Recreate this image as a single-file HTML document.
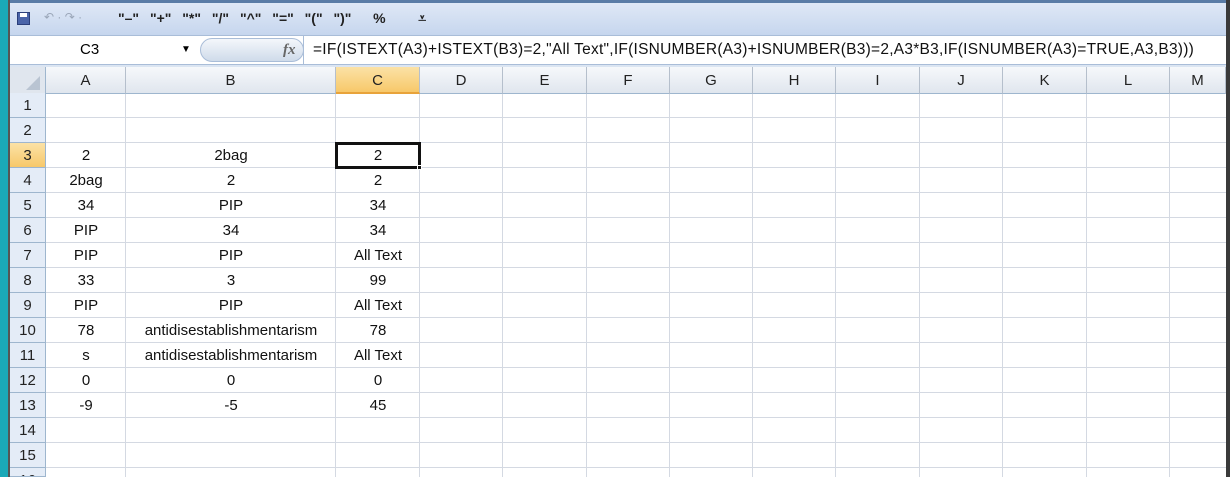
<!DOCTYPE html><html><head><style>
html,body{margin:0;width:1230px;height:477px;overflow:hidden}
body{background:#fff;font-family:"Liberation Sans",sans-serif;position:relative}
div{position:absolute;box-sizing:border-box}
.t{font-size:15px;color:#111;text-align:center;line-height:25px}
.ch{top:67px;height:27px;line-height:27px;font-size:15px;color:#222;text-align:center;background:linear-gradient(#f6f8fb,#e0e6ee);border-right:1px solid #b5bfcc;border-bottom:1px solid #9eb6ce}
.rh{left:10px;width:36px;height:25px;line-height:25px;font-size:15px;color:#222;text-align:center;background:#e4ecf7;border-bottom:1px solid #9eb6ce;border-right:1px solid #9eb6ce}
.vl{top:94px;height:383px;width:1px;background:#d4d9e2}
.hl{left:46px;width:1180px;height:1px;background:#d4d9e2}
</style></head><body>
<div style="left:0;top:0;width:10px;height:477px;background:#1aa9b8;border-right:2px solid #555"></div>
<div style="left:1226px;top:0;width:4px;height:477px;background:#3a3a3a"></div>
<div style="left:10px;top:0;width:1216px;height:3px;background:#5a7ca6"></div>
<div style="left:10px;top:3px;width:1216px;height:32px;background:linear-gradient(#dfe8f6,#c6d6ee)"></div>
<div style="left:17px;top:12px;width:13px;height:13px;background:#4a64a8;border:1px solid #2b3f7a"></div>
<div style="left:20px;top:13px;width:7px;height:4px;background:#fff"></div>
<div style="left:44px;top:8px;font-size:12px;color:#9aa6b8;line-height:18px">↶ · ↷ ·</div>
<div style="left:118px;top:9px;font-size:14px;font-weight:bold;color:#222;line-height:18px;word-spacing:7px;white-space:pre">"–" "+" "*" "/" "^" "=" "(" ")"  %   ⩡</div>
<div style="left:10px;top:35px;width:1216px;height:30px;background:#fff;border-top:1px solid #a9bdd8;border-bottom:1px solid #a9bdd8"></div>
<div style="left:80px;top:40px;font-size:15px;line-height:20px">C3</div>
<div style="left:181px;top:40px;font-size:10px;line-height:20px">▼</div>
<div style="left:200px;top:38px;width:104px;height:24px;border-radius:12px;background:linear-gradient(#f4f7fb,#cfdbea);border:1px solid #a9bdd8"></div>
<div style="left:283px;top:40px;font-family:'Liberation Serif';font-style:italic;font-weight:bold;font-size:15px;color:#666;line-height:20px">fx</div>
<div style="left:303px;top:36px;width:1px;height:28px;background:#a9bdd8"></div>
<div style="left:313px;top:40px;font-size:15.5px;letter-spacing:0.25px;line-height:20px;white-space:nowrap;color:#111">=IF(ISTEXT(A3)+ISTEXT(B3)=2,"All Text",IF(ISNUMBER(A3)+ISNUMBER(B3)=2,A3*B3,IF(ISNUMBER(A3)=TRUE,A3,B3)))</div>
<div style="left:10px;top:65px;width:1216px;height:2px;background:#dbe5f2"></div>
<div style="left:10px;top:67px;width:36px;height:27px;background:#e0e6ee;border-right:1px solid #9eb6ce;border-bottom:1px solid #9eb6ce"></div>
<div style="left:26px;top:76px;width:0;height:0;border-left:14px solid transparent;border-bottom:14px solid #b9c4d2"></div>
<div class="ch" style="left:46px;width:80px">A</div>
<div class="ch" style="left:126px;width:210px">B</div>
<div class="ch" style="left:336px;width:84px;background:linear-gradient(#fbe2a6,#f7c86a);border-bottom:2px solid #e8a33a">C</div>
<div class="ch" style="left:420px;width:83px">D</div>
<div class="ch" style="left:503px;width:84px">E</div>
<div class="ch" style="left:587px;width:83px">F</div>
<div class="ch" style="left:670px;width:83px">G</div>
<div class="ch" style="left:753px;width:83px">H</div>
<div class="ch" style="left:836px;width:84px">I</div>
<div class="ch" style="left:920px;width:83px">J</div>
<div class="ch" style="left:1003px;width:84px">K</div>
<div class="ch" style="left:1087px;width:83px">L</div>
<div class="ch" style="left:1170px;width:56px">M</div>
<div class="vl" style="left:125px"></div><div class="vl" style="left:335px"></div><div class="vl" style="left:419px"></div><div class="vl" style="left:502px"></div><div class="vl" style="left:586px"></div><div class="vl" style="left:669px"></div><div class="vl" style="left:752px"></div><div class="vl" style="left:835px"></div><div class="vl" style="left:919px"></div><div class="vl" style="left:1002px"></div><div class="vl" style="left:1086px"></div><div class="vl" style="left:1169px"></div>
<div class="hl" style="top:117px"></div><div class="hl" style="top:142px"></div><div class="hl" style="top:167px"></div><div class="hl" style="top:192px"></div><div class="hl" style="top:217px"></div><div class="hl" style="top:242px"></div><div class="hl" style="top:267px"></div><div class="hl" style="top:292px"></div><div class="hl" style="top:317px"></div><div class="hl" style="top:342px"></div><div class="hl" style="top:367px"></div><div class="hl" style="top:392px"></div><div class="hl" style="top:417px"></div><div class="hl" style="top:442px"></div><div class="hl" style="top:467px"></div>
<div class="rh" style="top:93px">1</div><div class="rh" style="top:118px">2</div><div class="rh" style="top:143px;background:linear-gradient(#fbe2a6,#f7c86a)">3</div><div class="rh" style="top:168px">4</div><div class="rh" style="top:193px">5</div><div class="rh" style="top:218px">6</div><div class="rh" style="top:243px">7</div><div class="rh" style="top:268px">8</div><div class="rh" style="top:293px">9</div><div class="rh" style="top:318px">10</div><div class="rh" style="top:343px">11</div><div class="rh" style="top:368px">12</div><div class="rh" style="top:393px">13</div><div class="rh" style="top:418px">14</div><div class="rh" style="top:443px">15</div><div class="rh" style="top:468px;height:9px;line-height:25px;overflow:hidden">16</div>
<div class="t" style="left:46px;width:80px;top:143px">2<br>2bag<br>34<br>PIP<br>PIP<br>33<br>PIP<br>78<br>s<br>0<br>-9</div>
<div class="t" style="left:126px;width:210px;top:143px">2bag<br>2<br>PIP<br>34<br>PIP<br>3<br>PIP<br>antidisestablishmentarism<br>antidisestablishmentarism<br>0<br>-5</div>
<div class="t" style="left:336px;width:84px;top:143px">2<br>2<br>34<br>34<br>All Text<br>99<br>All Text<br>78<br>All Text<br>0<br>45</div>
<div style="left:335px;top:142px;width:86px;height:27px;border:3px solid #111"></div>
<div style="left:417px;top:165px;width:5px;height:5px;background:#111;border:1px solid #fff"></div>
</body></html>
